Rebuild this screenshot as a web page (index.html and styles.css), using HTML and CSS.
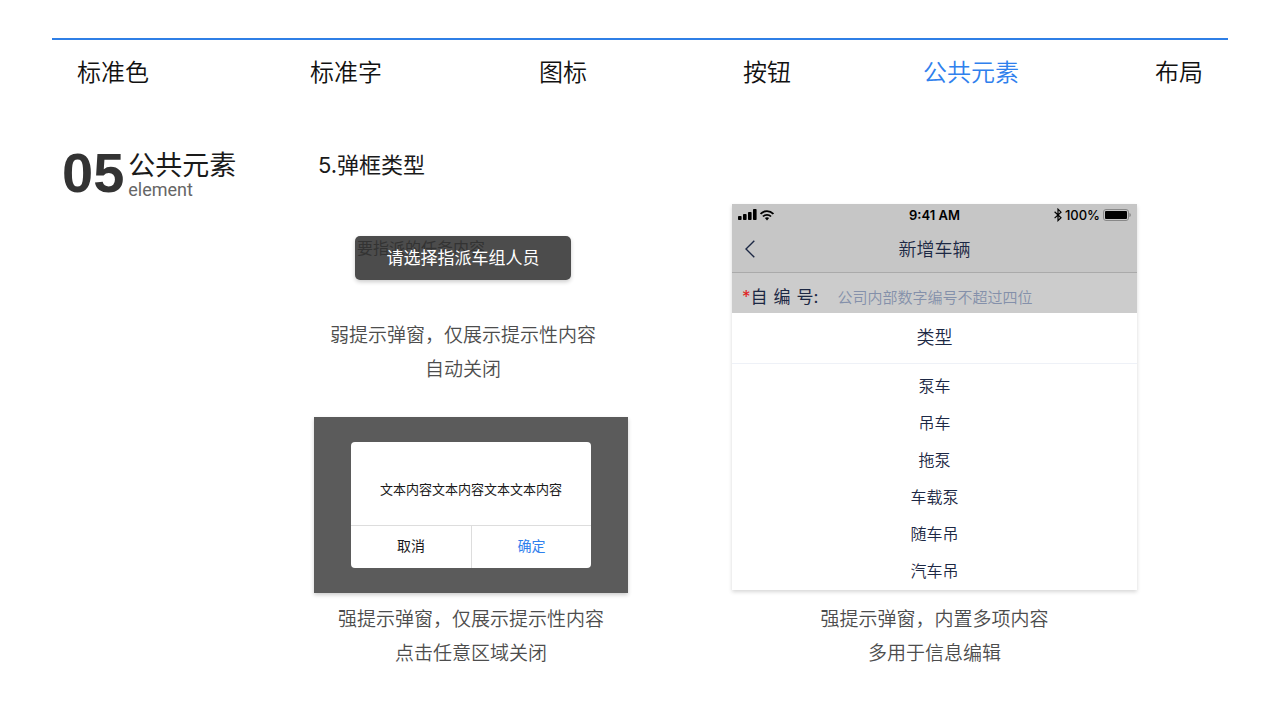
FILE: index.html
```html
<!DOCTYPE html>
<html lang="zh-CN">
<head>
<meta charset="utf-8">
<meta name="viewport" content="width=device-width, initial-scale=1">
<title>公共元素 - 弹框类型</title>
<link rel="stylesheet" href="styles.css">
</head>
<body>
<div class="page">
  <nav class="nav">
    <a href="#color">标准色</a>
    <a href="#type">标准字</a>
    <a href="#icon">图标</a>
    <a href="#button">按钮</a>
    <a href="#element" class="current" aria-current="page">公共元素</a>
    <a href="#layout">布局</a>
  </nav>
  <main class="content">
    <header class="chapter">
      <span class="chapter-no">05</span>
      <div class="chapter-name">
        <h1>公共元素</h1>
        <p>element</p>
      </div>
    </header>
    <section class="prompts">
      <h2>5.弹框类型</h2>
      <figure class="sample sample-toast">
        <div class="toast" role="status">
          <span class="toast-behind">要指派的任务内容</span>
          <span class="toast-text">请选择指派车组人员</span>
        </div>
        <figcaption>弱提示弹窗，仅展示提示性内容<br>自动关闭</figcaption>
      </figure>
      <figure class="sample">
        <div class="overlay">
          <div class="dialog" role="dialog" aria-label="提示">
            <p>文本内容文本内容文本文本内容</p>
            <div class="dialog-actions">
              <button type="button">取消</button>
              <button type="button" class="primary">确定</button>
            </div>
          </div>
        </div>
        <figcaption>强提示弹窗，仅展示提示性内容<br>点击任意区域关闭</figcaption>
      </figure>
    </section>
    <figure class="sample sample-phone">
      <div class="phone">
        <div class="phone-top">
          <div class="status">
            <span class="status-left">
              <svg width="19" height="12" viewBox="0 0 19 12" aria-hidden="true"><rect x="0" y="7" width="3.6" height="4" rx="0.8"/><rect x="5" y="5" width="3.6" height="6" rx="0.8"/><rect x="10" y="3" width="3.6" height="8" rx="0.8"/><rect x="15" y="0" width="3.6" height="11" rx="0.8"/></svg>
              <svg width="14" height="11" viewBox="0 0 14 11" fill="none" stroke="#000" stroke-width="1.8" aria-hidden="true"><path d="M.6 4C4.2.2 9.800.2 13.400 4"/><path d="M3 6.500C5.200 4.200 8.800 4.200 11 6.500"/><path d="M4.900 8.100C6.100 7 7.900 7 9.100 8.100L7 10.500Z" fill="#000" stroke="none"/></svg>
            </span>
            <span class="time">9:41 AM</span>
            <span class="status-right">
              <svg width="8" height="14" viewBox="0 0 8 14" fill="none" stroke="#000" stroke-width="1.2" aria-hidden="true"><path d="M.6 3.800 7 9.700 4 12.600V1.200L7 4.200.6 10.100"/></svg>
              <span>100%</span>
              <svg width="28" height="12" viewBox="0 0 28 12" aria-hidden="true"><rect x=".5" y=".5" width="25" height="11" rx="2.500" fill="none" stroke="#888"/><rect x="2" y="2" width="22" height="8" rx="1"/><path d="M26.500 4c1.600.5 1.600 3.500 0 4Z" fill="#777"/></svg>
            </span>
          </div>
          <div class="titlebar">
            <button type="button" aria-label="返回"><svg width="11" height="18" viewBox="0 0 11 18" fill="none" stroke="#1c2844" stroke-width="1.400" aria-hidden="true"><path d="M10.300.7 2 9l8.300 8.300"/></svg></button>
            <h3>新增车辆</h3>
          </div>
        </div>
        <div class="field">
          <label for="car-no"><span class="required">*</span><span>自</span><span>编</span><span>号:</span></label>
          <input id="car-no" type="text" placeholder="公司内部数字编号不超过四位">
        </div>
        <div class="sheet">
          <h3>类型</h3>
          <ul>
            <li><button type="button">泵车</button></li>
            <li><button type="button">吊车</button></li>
            <li><button type="button">拖泵</button></li>
            <li><button type="button">车载泵</button></li>
            <li><button type="button">随车吊</button></li>
            <li><button type="button">汽车吊</button></li>
          </ul>
        </div>
      </div>
      <figcaption>强提示弹窗，内置多项内容<br>多用于信息编辑</figcaption>
    </figure>
  </main>
</div>
</body>
</html>
```
FILE: styles.css
```css
* {
  box-sizing: border-box;
}

body,
h1,
h2,
h3,
p,
ul,
figure {
  margin: 0;
  padding: 0;
}

body {
  background: #fff;
  color: #1a1a1a;
  font-family: Inter, "Noto Sans CJK SC", sans-serif;
}

button,
input {
  margin: 0;
  padding: 0;
  border: 0;
  background: none;
  color: inherit;
  font: inherit;
}

h1,
h2,
h3 {
  font-weight: 400;
}

.page {
  padding: 38px 52px 24px;
}

.nav {
  display: grid;
  grid-template-columns: 233fr 229fr 204fr 180fr 232fr auto;
  padding: 15px 25px 0;
  border-top: 2px solid #2f7fe6;
  font-size: 24px;
  font-weight: 350;
  line-height: 36px;
}

.nav a {
  color: #111;
  text-decoration: none;
  white-space: nowrap;
}

.nav .current {
  color: #2f80ed;
}

.content {
  display: grid;
  grid-template-columns: 262fr 314fr 104fr 405fr 91fr;
  padding-top: 55px;
}

.chapter {
  display: flex;
  align-items: flex-start;
  gap: 4px;
  padding-left: 10px;
}

.chapter-no {
  color: #333;
  font: bold 56px/54px "Liberation Sans", Arial, sans-serif;
}

.chapter-name h1 {
  padding-top: 3px;
  font-size: 27px;
  line-height: 34px;
}

.chapter-name p {
  color: #666;
  font-family: Roboto, sans-serif;
  font-size: 18px;
  line-height: 14px;
}

.prompts h2 {
  padding-left: 4px;
  font-size: 22px;
  line-height: 38px;
}

.sample {
  display: flex;
  flex-direction: column;
  align-items: center;
}

.sample figcaption {
  color: #4d4d4d;
  font-size: 19px;
  font-weight: 350;
  line-height: 34px;
  text-align: center;
  white-space: nowrap;
}

.sample-toast {
  gap: 39px;
  margin: 52px 16px 30px 0;
}

.toast {
  position: relative;
  width: 216px;
  border-radius: 5px;
  background: #4c4c4c;
  box-shadow: 0 2px 4px rgba(0, 0, 0, 0.2);
  color: #fff;
  font-size: 17px;
  line-height: 44px;
  text-align: center;
}

.toast-behind {
  position: absolute;
  top: 0;
  left: 2px;
  color: #333;
  font-size: 16px;
  line-height: 24px;
}

.toast-text {
  position: relative;
}

.overlay {
  align-self: stretch;
  margin-bottom: 10px;
  padding: 25px 37px;
  background: #5b5b5b;
  box-shadow: 0 2px 4px rgba(0, 0, 0, 0.2);
}

.dialog {
  border-radius: 4px;
  background: #fff;
  font-size: 13px;
  text-align: center;
}

.dialog p {
  padding: 35px 0 24px;
  line-height: 24px;
}

.dialog-actions {
  display: grid;
  grid-template-columns: 1fr 1fr;
  border-top: 1px solid #ddd;
}

.dialog-actions button {
  padding-bottom: 2px;
  font-size: 14px;
  line-height: 40px;
}

.dialog-actions .primary {
  border-left: 1px solid #ddd;
  color: #2f80ed;
}

.sample-phone {
  grid-column: 4;
  padding-top: 58px;
}

.phone {
  align-self: stretch;
  margin-bottom: 13px;
  box-shadow: 0 2px 4px rgba(0, 0, 0, 0.16);
  color: #1c2844;
  font-weight: 350;
}

.phone-top {
  border-bottom: 1px solid #aaa;
  background: #c6c6c6;
}

.status {
  display: grid;
  grid-template-columns: 1fr auto 1fr;
  align-items: center;
  padding: 0 6px;
  color: #000;
  font-size: 13px;
  font-weight: 500;
  line-height: 22px;
}

.status-left,
.status-right {
  display: flex;
  align-items: center;
  gap: 3px;
}

.status-right {
  justify-content: flex-end;
}

.time {
  font-weight: 600;
}

.titlebar {
  display: grid;
  grid-template-columns: 24px 1fr 24px;
  align-items: center;
  padding: 0 12px;
}

.titlebar button {
  display: flex;
}

.titlebar h3 {
  padding-top: 2px;
  font-size: 18px;
  font-weight: inherit;
  line-height: 44px;
  text-align: center;
}

.field {
  display: flex;
  align-items: center;
  gap: 19px;
  padding: 8px 10px 0;
  background: #ccc;
}

.field label {
  display: flex;
  font-size: 17px;
  font-weight: 400;
  line-height: 32px;
  white-space: nowrap;
}

.field label span + span + span {
  margin-left: 6px;
}

.required {
  color: #e02020;
}

.field input {
  flex: 1;
  min-width: 0;
  font-size: 15px;
}

.field input::placeholder {
  color: #8490aa;
  opacity: 1;
}

.sheet {
  background: #fff;
  text-align: center;
}

.sheet h3 {
  border-bottom: 1px solid #eef1f7;
  font-size: 18px;
  font-weight: inherit;
  line-height: 50px;
}

.sheet ul {
  padding-top: 4px;
  list-style: none;
}

.sheet button {
  display: block;
  width: 100%;
  font-size: 16px;
  line-height: 37px;
}
```
